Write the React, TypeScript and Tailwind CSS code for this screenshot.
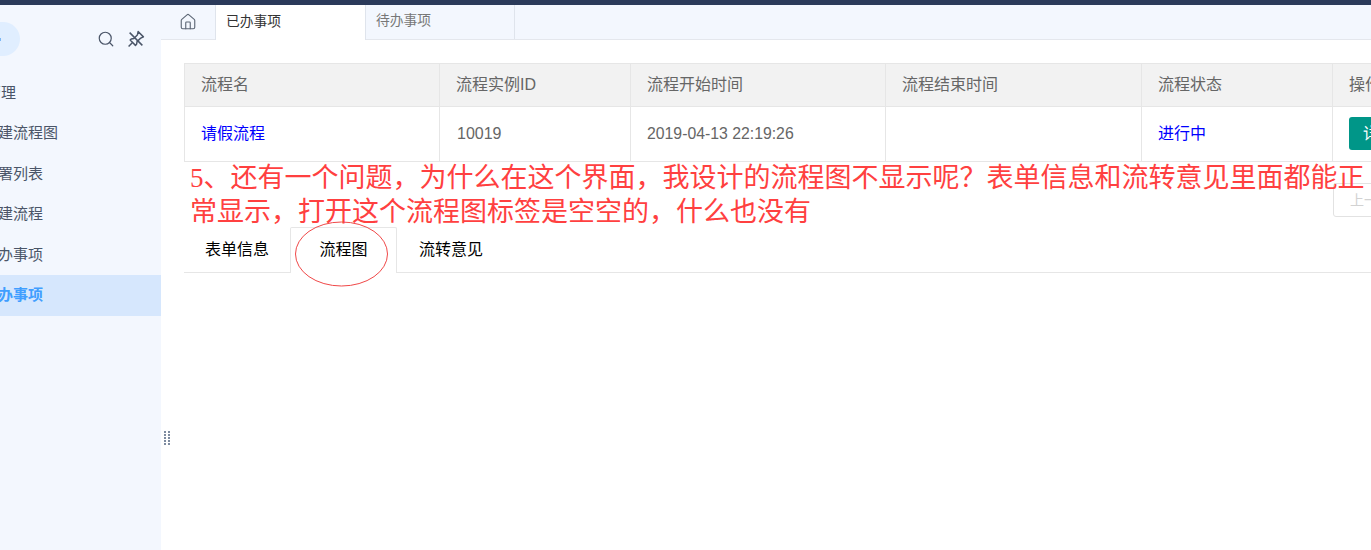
import React from 'react';
import { House, Search } from 'lucide-react';

const menuItems = [
  { label: '管理', offset: 'ml-[-14px]' },
  { label: '新建流程图', offset: 'ml-[-17px]' },
  { label: '部署列表', offset: 'ml-[-17px]' },
  { label: '新建流程', offset: 'ml-[-17px]' },
  { label: '待办事项', offset: 'ml-[-17px]' },
  { label: '已办事项', offset: 'ml-[-17px]', active: true },
];

const columns = [
  { title: '流程名', width: 'w-[255px]' },
  { title: '流程实例ID', width: 'w-[191px]' },
  { title: '流程开始时间', width: 'w-[255px]' },
  { title: '流程结束时间', width: 'w-[256px]' },
  { title: '流程状态', width: 'w-[191px]' },
  { title: '操作', width: 'w-[120px]' },
];

const PinIcon = () => (
  <svg className="ml-[12px] shrink-0" width="18" height="18" viewBox="0 0 17 17" fill="none" stroke="#4a5568" strokeWidth="1.4">
    <path d="M10.5 1.5l5 5-2 1-1 .5-3 3-.5 2.5-1 1-5-5 1-1 2.5-.5 3-3 .5-1z" strokeLinejoin="round" />
    <path d="M5 12l-3.5 3.5" />
    <path d="M2.5 2.5l12 12" />
  </svg>
);

const App: React.FC = () => {
  return (
    <div className="relative flex h-[550px] w-[1371px] flex-col overflow-hidden bg-white font-['Liberation_Sans','Noto_Sans_CJK_SC',sans-serif]">
      <div className="h-[5px] shrink-0 bg-[#2b3a5a]" />

      <div className="flex min-h-0 flex-1">
        {/* Sidebar */}
        <aside className="w-[161px] shrink-0 overflow-hidden bg-[#f3f7fe]">
          <div className="mt-[17px] flex h-[34px] items-center">
            <div className="ml-[-80px] flex h-[34px] w-[100px] shrink-0 items-center justify-end rounded-full bg-[#e0eeff] pr-[19px]">
              <div className="h-[3px] w-[2px] bg-[#7db8f5]" />
            </div>
            <Search className="ml-[77px] h-[18px] w-[18px] shrink-0 text-[#4a5568]" strokeWidth={1.6} />
            <PinIcon />
          </div>
          <nav className="mt-[17px]">
            {menuItems.map((item) => (
              <div
                key={item.label}
                className={`flex items-center text-[15px] whitespace-nowrap ${
                  item.active ? 'h-[41px] bg-[#d6e7fd] font-bold text-[#409eff]' : 'h-[40.4px] text-[#4a5568]'
                }`}
              >
                <span className={item.offset}>{item.label}</span>
              </div>
            ))}
          </nav>
        </aside>

        {/* Main */}
        <main className="min-w-0 flex-1">
          <div className="flex h-[35px] border-b border-[#e4e7ed] bg-[#f3f7fe] text-[13.75px]">
            <div className="flex w-[54px] items-center justify-center pb-[1px]">
              <House className="h-[18px] w-[18px] text-[#5c6675]" strokeWidth={1.5} />
            </div>
            <div className="flex h-[35px] w-[151px] items-center border-x border-[#dfe4ec] bg-white pb-[1px] pl-[10px] text-[#333]">
              已办事项
            </div>
            <div className="flex w-[149px] items-center border-r border-[#dfe4ec] pb-[1px] pl-[10px] text-[#777]">
              待办事项
            </div>
          </div>

          <div className="w-[1300px] pl-[23px] pt-[23px]">
            <table className="w-[1268px] table-fixed border-collapse text-[16px] text-[#666]">
              <thead>
                <tr className="h-[43px] bg-[#f2f2f2]">
                  {columns.map((col) => (
                    <th key={col.title} className={`${col.width} border border-[#e6e6e6] pl-[16px] text-left font-normal`}>
                      {col.title}
                    </th>
                  ))}
                </tr>
              </thead>
              <tbody>
                <tr className="h-[55px]">
                  <td className="border border-[#e6e6e6] pl-[16px] text-[#0000ff]">请假流程</td>
                  <td className="border border-[#e6e6e6] pl-[17px]">10019</td>
                  <td className="border border-[#e6e6e6] pl-[16px] text-[15.8px]">2019-04-13 22:19:26</td>
                  <td className="border border-[#e6e6e6]" />
                  <td className="border border-[#e6e6e6] pl-[16px] text-[#0000ff]">进行中</td>
                  <td className="border border-[#e6e6e6] pl-[16px]">
                    <button className="mb-[1px] block h-[33px] w-[60px] rounded-[3px] bg-[#009688] text-center text-white">详情</button>
                  </td>
                </tr>
              </tbody>
            </table>

            <div className="ml-[1149px] mt-[21px] flex h-[34px] w-[70px] items-center rounded-[3px] border border-[#e2e2e2] pl-[16px] text-[14px] whitespace-nowrap text-[#d2d2d2]">
              上一页
            </div>

            <div className="mt-[10px] flex h-[46px] w-[1187px] border-b border-[#e6e6e6] text-[16px] text-black">
              <div className="flex w-[106px] items-center pl-[21px]">表单信息</div>
              <div className="flex h-[46px] w-[107px] items-center justify-center rounded-t-[2px] border-x border-t border-[#e6e6e6] bg-white pb-[1px]">
                流程图
              </div>
              <div className="flex items-center pl-[22px]">流转意见</div>
            </div>
          </div>
        </main>
      </div>

      {/* Red annotation written over the screenshot */}
      <p className="absolute left-[190px] top-[162px] w-[1180px] font-['Liberation_Serif','Noto_Sans_CJK_SC',serif] text-[27px] leading-[33.5px] text-[#ff4040]">
        5、还有一个问题，为什么在这个界面，我设计的流程图不显示呢？表单信息和流转意见里面都能正常显示，打开这个流程图标签是空空的，什么也没有
      </p>
      <svg className="absolute left-[294px] top-[221px]" width="96" height="68" viewBox="0 0 96 68" fill="none">
        <ellipse cx="47.5" cy="33" rx="46" ry="32" stroke="#f04848" strokeWidth="1" />
      </svg>

      {/* Drag handle */}
      <div className="absolute left-[164px] top-[431px] grid grid-cols-2 gap-x-[2px] gap-y-[1px]">
        {Array.from({ length: 10 }).map((_, i) => (
          <div key={i} className="h-[2px] w-[2px] bg-[#7d8ba0]" />
        ))}
      </div>
    </div>
  );
};

export default App;
